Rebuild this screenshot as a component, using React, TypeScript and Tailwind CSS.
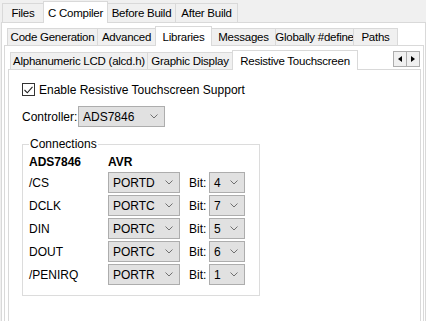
import React from "react";

type TabProps = { label: string; width: number; selected?: boolean; h: number };

function Tab({ label, width, selected, h }: TabProps) {
  return (
    <div
      className={
        selected
          ? "relative z-10 -mb-px -ml-px flex items-center justify-center border border-b-0 border-[#d9d9d9] bg-white"
          : "-ml-px flex items-center justify-center border border-b-0 border-[#d9d9d9] bg-[#f0f0f0] first:ml-0"
      }
      style={{ width, height: selected ? h + 4 : h }}
    >
      <span className="text-[11.5px] tracking-[-0.25px] whitespace-nowrap">{label}</span>
    </div>
  );
}

function Chevron() {
  return (
    <svg width="8" height="5" viewBox="0 0 8 5" className="shrink-0">
      <path d="M0.5 0.5 L4 4 L7.5 0.5" fill="none" stroke="#707070" strokeWidth="1" />
    </svg>
  );
}

function Select({ value, width }: { value: string; width: number }) {
  return (
    <div
      className="flex h-[21px] items-center justify-between border border-[#adadad] bg-[#e1e1e1] pr-[6px] pl-[4px]"
      style={{ width }}
    >
      <span>{value}</span>
      <Chevron />
    </div>
  );
}

const rows = [
  { pin: "/CS", port: "PORTD", bit: "4" },
  { pin: "DCLK", port: "PORTC", bit: "7" },
  { pin: "DIN", port: "PORTC", bit: "5" },
  { pin: "DOUT", port: "PORTC", bit: "6" },
  { pin: "/PENIRQ", port: "PORTR", bit: "1" },
];

export default function App() {
  return (
    <div className="h-[321px] w-[426px] overflow-hidden bg-[#f0f0f0] font-['Liberation_Sans',sans-serif] text-[12px] leading-[14px] text-black">
      {/* top tabs */}
      <div className="flex h-[22px] items-end pl-[2px]">
        <Tab label="Files" width={42} h={19} />
        <Tab label="C Compiler" width={65} h={18} selected />
        <Tab label="Before Build" width={69} h={19} />
        <Tab label="After Build" width={63} h={19} />
      </div>

      <div className="ml-px h-[400px] w-[425px] border border-[#d9d9d9] bg-white">
        {/* second tabs */}
        <div className="flex h-[22px] items-end pl-[5px]">
          <Tab label="Code Generation" width={91} h={17} />
          <Tab label="Advanced" width={59} h={17} />
          <Tab label="Libraries" width={57} h={16} selected />
          <Tab label="Messages" width={65} h={17} />
          <Tab label="Globally #define" width={79} h={17} />
          <Tab label="Paths" width={45} h={17} />
        </div>

        <div className="mr-px ml-[2px] h-[400px] border border-[#d9d9d9]">
          {/* third tabs */}
          <div className="flex h-[23px] items-end pl-[5px]">
            <Tab label="Alphanumeric LCD (alcd.h)" width={138} h={17} />
            <Tab label="Graphic Display" width={86} h={17} />
            <Tab label="Resistive Touchscreen" width={126} h={16} selected />
            <div className="mr-[3px] mb-[2px] ml-auto flex">
              <div className="flex h-[16px] w-[14px] items-center justify-center border border-[#adadad] bg-[#f0f0f0]">
                <svg width="4" height="6" viewBox="0 0 4 6">
                  <path d="M4 0 L0 3 L4 6 Z" fill="#000" />
                </svg>
              </div>
              <div className="-ml-px flex h-[16px] w-[14px] items-center justify-center border border-[#adadad] bg-[#f0f0f0]">
                <svg width="4" height="6" viewBox="0 0 4 6">
                  <path d="M0 0 L4 3 L0 6 Z" fill="#000" />
                </svg>
              </div>
            </div>
          </div>

          <div className="mr-[2px] ml-[3px] h-[400px] border border-[#d9d9d9] pt-[13px] pl-[13px]">
            <div className="flex h-[13px] items-center gap-[4px]">
              <div className="flex h-[13px] w-[13px] items-center justify-center border border-[#333] bg-white">
                <svg width="9" height="8" viewBox="0 0 9 8">
                  <path d="M0.5 4 L3.3 6.8 L8.5 0.8" fill="none" stroke="#222" strokeWidth="1.1" />
                </svg>
              </div>
              <span>Enable Resistive Touchscreen Support</span>
            </div>

            <div className="mt-[10px] flex items-center">
              <span className="w-[56px]">Controller:</span>
              <Select value="ADS7846" width={87} />
            </div>

            <div className="relative mt-[17px] h-[152px] w-[238px] border border-[#dcdcdc] pt-[10px] pl-[6px]">
              <span className="absolute -top-[8px] left-[6px] bg-white px-px">Connections</span>
              <div className="flex font-bold">
                <span className="w-[79px]">ADS7846</span>
                <span>AVR</span>
              </div>
              <div className="mt-[3px] flex flex-col gap-[2px]">
                {rows.map((r) => (
                  <div key={r.pin} className="flex items-center">
                    <span className="w-[79px]">{r.pin}</span>
                    <Select value={r.port} width={72} />
                    <span className="ml-[9px] w-[20px]">Bit:</span>
                    <Select value={r.bit} width={36} />
                  </div>
                ))}
              </div>
            </div>
          </div>
        </div>
      </div>
    </div>
  );
}
